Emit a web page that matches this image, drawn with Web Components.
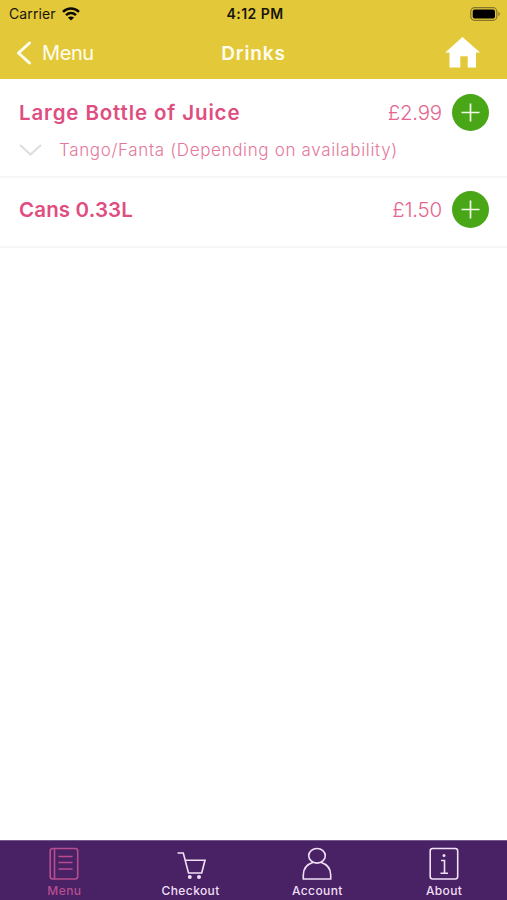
<!DOCTYPE html>
<html lang="en">
<head>
<meta charset="utf-8">
<title>Drinks</title>
<style>
  body {
    margin: 0;
    background: #fff;
    font-family: Inter, "Liberation Sans", sans-serif;
  }
</style>
</head>
<body>
<drinks-app></drinks-app>

<script>
const define = (name, html) => {
  const template = document.createElement("template");
  template.innerHTML = html;
  customElements.define(name, class extends HTMLElement {
    constructor() {
      super();
      this.attachShadow({ mode: "open" }).append(template.content.cloneNode(true));
    }
  });
};

define("status-bar", `
  <style>
    :host {
      display: grid;
      grid-template-columns: 1fr auto 1fr;
      align-items: center;
      height: 27px;
      padding: 0 6px 0 9px;
      color: #18150a;
      font-size: 14px;
    }
    .carrier { display: flex; align-items: center; gap: 6px; letter-spacing: .1px; }
    .time { font-weight: 600; letter-spacing: .45px; }
    .battery { justify-self: end; }
    svg { display: block; }
  </style>
  <div class="carrier">
    <span>Carrier</span>
    <svg width="18" height="14" viewBox="0 0 18 14" fill="none" stroke="#0c0a04" stroke-width="2.5">
      <path d="M1 4.800C5.600.5 12.400.5 17 4.800M4 8.100c3-2.700 7-2.700 10 0"/>
      <path d="M9 13.600 5.900 10.500c1.900-1.500 4.300-1.500 6.200 0z" fill="#0c0a04" stroke="none"/>
    </svg>
  </div>
  <span class="time">4:12 PM</span>
  <svg class="battery" width="31" height="14" viewBox="0 0 31 14">
    <rect x=".8" y=".7" width="26" height="12.600" rx="3.800" fill="none" stroke="#87762a" stroke-width="1.200"/>
    <rect x="2.700" y="2.500" width="22.300" height="9" rx="2" fill="#000"/>
    <path d="M28.300 4.800c1.900.6 1.900 3.800 0 4.400z" fill="#87762a"/>
  </svg>
`);

define("nav-bar", `
  <style>
    :host {
      display: grid;
      grid-template-columns: 1fr auto 1fr;
      align-items: center;
      height: 52px;
      padding: 0 16px;
      color: #fffdf0;
    }
    .back { display: flex; align-items: center; gap: 10px; font-size: 20px; letter-spacing: -.4px; }
    .title { font-size: 19px; font-weight: 600; letter-spacing: .85px; }
    .home { justify-self: end; margin-right: 11px; }
    svg { display: block; }
  </style>
  <div class="back">
    <svg width="16" height="24" viewBox="0 0 16 24" fill="none" stroke="#fffdf0" stroke-width="3" stroke-linecap="round" stroke-linejoin="round">
      <path d="M13.500 2 2.500 12l11 10"/>
    </svg>
    <slot name="back"></slot>
  </div>
  <span class="title"><slot></slot></span>
  <svg class="home" width="35" height="32" viewBox="0 0 35 32" fill="#fff">
    <path d="M17.500 0 35 15.500h-4V30.500h-8.300V19.300h-7.400V30.500H4.500V15.500H.3z"/>
  </svg>
`);

define("menu-item", `
  <style>
    :host {
      display: block;
      box-sizing: border-box;
      padding: 15px 18px 0 19px;
      border-bottom: 2px solid #f6f6f6;
      color: #df4e80;
    }
    .line { display: flex; align-items: center; height: 37px; }
    .name { flex: 1; font-size: 20.500px; font-weight: 600; letter-spacing: var(--name-spacing, .15px); }
    .price { margin-right: 10px; font-size: 20.500px; font-weight: 300; letter-spacing: -.2px; color: #e4668f; }
    svg { display: block; }
    ::slotted([slot="note"]) { color: #e4789b; }
  </style>
  <div class="line">
    <span class="name"><slot></slot></span>
    <span class="price"><slot name="price"></slot></span>
    <svg width="37" height="37" viewBox="0 0 37 37">
      <circle cx="18.500" cy="18.500" r="18.500" fill="#49a617"/>
      <path d="M18.500 9.500v18M9.500 18.500h18" stroke="#f2fae9" stroke-width="1.700"/>
    </svg>
  </div>
  <slot name="note"></slot>
`);

define("item-note", `
  <style>
    :host {
      display: flex;
      align-items: center;
      gap: 17px;
      height: 37px;
      font-size: 17px;
      font-weight: 300;
      letter-spacing: .65px;
    }
    svg { display: block; }
  </style>
  <svg width="23" height="14" viewBox="0 0 23 14" fill="none" stroke="#dedede" stroke-width="2.200">
    <path d="M1 2l10.500 9.500L22 2"/>
  </svg>
  <span><slot></slot></span>
`);

define("tab-item", `
  <style>
    :host {
      display: flex;
      flex-direction: column;
      align-items: center;
      padding-left: 1px;
      color: #f2dff6;
      font-size: 12px;
      font-weight: 500;
      letter-spacing: .4px;
      line-height: 16px;
    }
    :host([active]) { padding-left: 2px; color: #b74e91; }
    .icon { height: 36px; padding-top: 6px; }
    ::slotted(svg) {
      display: block;
      fill: none;
      stroke: currentColor;
      stroke-width: 1.600;
    }
  </style>
  <div class="icon"><slot name="icon"></slot></div>
  <span><slot></slot></span>
`);

define("tab-bar", `
  <style>
    :host {
      display: grid;
      grid-template-columns: repeat(4, 1fr);
      box-sizing: border-box;
      height: 60px;
      border-top: 1px solid #76598c;
      background: #482264;
    }
  </style>
  <slot></slot>
`);

define("drinks-app", `
  <style>
    :host { display: flex; flex-direction: column; height: 900px; }
    header { background: #e3c93a; }
    main { flex: 1; }
    .tall { height: 99px; --name-spacing: .87px; }
    .short { height: 70px; padding-top: 13px; }
  </style>
  <header>
    <status-bar></status-bar>
    <nav-bar><span slot="back">Menu</span>Drinks</nav-bar>
  </header>
  <main>
    <menu-item class="tall">
      Large Bottle of Juice
      <span slot="price">£2.99</span>
      <item-note slot="note">Tango/Fanta (Depending on availability)</item-note>
    </menu-item>
    <menu-item class="short">
      Cans 0.33L
      <span slot="price">£1.50</span>
    </menu-item>
  </main>
  <tab-bar>
    <tab-item active>
      <svg slot="icon" width="30" height="34" viewBox="0 0 30 34">
        <rect x="1.200" y="1.500" width="27.500" height="30.500" rx="2.500"/>
        <path d="M5.500 1.500V32M9.500 9.500h14M9.500 15.500h14M9.500 22h14"/>
      </svg>
      Menu
    </tab-item>
    <tab-item>
      <svg slot="icon" width="30" height="34" viewBox="0 0 30 34">
        <path d="M1.500 6h5.800l5.200 20h13.200L29 13.300H9.200"/>
        <circle cx="13.800" cy="30" r="2" fill="currentColor" stroke="none"/>
        <circle cx="23" cy="30" r="2" fill="currentColor" stroke="none"/>
      </svg>
      Checkout
    </tab-item>
    <tab-item>
      <svg slot="icon" width="30" height="34" viewBox="0 0 30 34">
        <ellipse cx="15" cy="8.800" rx="8.300" ry="7.300"/>
        <path d="M11.200 15.300C5 17.300 1.300 22 1.300 28v4h27.400v-4c0-6-3.700-10.700-9.900-12.700"/>
      </svg>
      Account
    </tab-item>
    <tab-item>
      <svg slot="icon" width="30" height="34" viewBox="0 0 30 34">
        <rect x="1.200" y="1.500" width="27.500" height="30.500" rx="2.500"/>
        <path d="M12 13.500h3.500V26M11.500 26.200h7.500"/>
        <circle cx="15" cy="8.500" r="1.500" fill="currentColor" stroke="none"/>
      </svg>
      About
    </tab-item>
  </tab-bar>
`);
</script>
</body>
</html>
